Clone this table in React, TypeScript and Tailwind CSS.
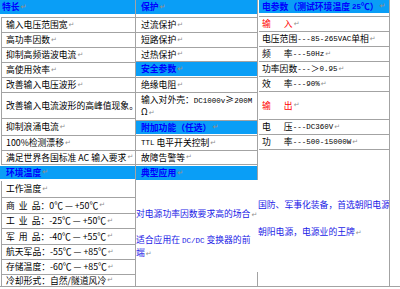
import React from "react";

type C = { className?: string; children?: React.ReactNode };

function P() {
  return (
    <span className="ml-[1px] font-['DejaVu_Sans',sans-serif] text-[7px] leading-none text-[#8f8f8f]">
      ↵
    </span>
  );
}

function M({ children }: C) {
  return <span className="font-['Liberation_Mono',monospace] text-[7.5px]">{children}</span>;
}

function Head({ className = "", children }: C) {
  return (
    <div
      className={
        "flex shrink-0 items-center overflow-hidden whitespace-nowrap bg-[#0a9ef6] font-bold text-[#0000ff] " +
        className
      }
    >
      {children}
    </div>
  );
}

function Cell1({ className = "", children }: C) {
  return (
    <div
      className={
        "ml-px flex shrink-0 items-center overflow-hidden whitespace-nowrap border-l border-[#a3a3a3] pl-[4px] " +
        className
      }
    >
      {children}
    </div>
  );
}

function Cell2({ className = "", children }: C) {
  return (
    <div
      className={
        "flex shrink-0 items-center overflow-hidden whitespace-nowrap border-[#a3a3a3] pl-[5px] " + className
      }
    >
      {children}
    </div>
  );
}

function Cell3({ className = "", children }: C) {
  return (
    <div
      className={
        "ml-px flex shrink-0 items-center overflow-hidden whitespace-nowrap border-[#a3a3a3] pl-[3px] " + className
      }
    >
      {children}
    </div>
  );
}

function Temp({ a, b, c, v }: { a: string; b: string; c: string; v: string }) {
  return (
    <>
      <span>{a}</span>
      <span className="ml-[4px]">{b}</span>
      <span className="ml-[4px]">{c}</span>
      <span>：{v}</span>
      <P />
    </>
  );
}

export default function App() {
  return (
    <div className="h-[289px] w-[400px] overflow-hidden bg-white font-['Noto_Sans_CJK_SC',sans-serif] text-[8.8px] leading-[12px] text-black">
      <div className="flex h-[287px] w-[400px] border-b border-[#a3a3a3]">
        <div className="flex h-full w-[390px] border-r border-[#a3a3a3]">
          {/* Column 1 */}
          <div className="flex w-[135px] shrink-0 flex-col">
            <Head className="h-[14px] pl-[2px]">
              特长
              <P />
            </Head>
            <div className="h-[3px] shrink-0" />
            <Cell1 className="h-[15px] border-t">
              输入电压范围宽
              <P />
            </Cell1>
            <Cell1 className="h-[15px] border-t">
              高功率因数
              <P />
            </Cell1>
            <Cell1 className="h-[15px] border-t">
              抑制高频谐波电流
              <P />
            </Cell1>
            <Cell1 className="h-[15px] border-t">
              高使用效率
              <P />
            </Cell1>
            <Cell1 className="h-[15px] border-t">
              改善输入电压波形
              <P />
            </Cell1>
            <Cell1 className="h-[26px] border-t">
              改善输入电流波形的高峰值现象。
              <P />
            </Cell1>
            <Cell1 className="h-[17px] border-t">
              抑制浪涌电流
              <P />
            </Cell1>
            <Cell1 className="h-[15px] border-t">
              100%检测漂移
              <P />
            </Cell1>
            <Cell1 className="h-[15px] border-t border-b">
              满足世界各国标准 AC 输入要求
              <P />
            </Cell1>
            <div className="h-[1px] shrink-0" />
            <Head className="h-[13px] pl-[6px]">
              环境温度
              <P />
            </Head>
            <div className="h-[2px] shrink-0" />
            <Cell1 className="h-[16px]">
              工作温度
              <P />
            </Cell1>
            <Cell1 className="h-[16px] border-t">
              <Temp a="商" b="业" c="品" v="0℃ — +50℃" />
            </Cell1>
            <Cell1 className="h-[15px] border-t">
              <Temp a="工" b="业" c="品" v="-25℃ — +50℃" />
            </Cell1>
            <Cell1 className="h-[16px] border-t">
              <Temp a="军" b="用" c="品" v="-40℃ — +55℃" />
            </Cell1>
            <Cell1 className="h-[15px] border-t">
              航天军品：-55℃ — +85℃
              <P />
            </Cell1>
            <Cell1 className="h-[15px] border-t">
              存储温度：-60℃ — +85℃
              <P />
            </Cell1>
            <Cell1 className="h-[12px] border-t">
              冷却形式：自然/隧道风冷
              <P />
            </Cell1>
          </div>

          {/* Column 2 */}
          <div className="flex w-[123px] shrink-0 flex-col border-l border-[#a3a3a3]">
            <div className="flex shrink-0 flex-col border-r border-[#a3a3a3]">
              <Head className="h-[14px] pl-[5px]">
                保护
                <P />
              </Head>
              <div className="h-[3px] shrink-0" />
              <Cell2 className="h-[15px] border-t">
                过流保护
                <P />
              </Cell2>
              <Cell2 className="h-[15px] border-t">
                短路保护
                <P />
              </Cell2>
              <Cell2 className="h-[15px] border-t border-b">
                过热保护
                <P />
              </Cell2>
              <Head className="h-[14px] pl-[5px]">
                安全参数
                <P />
              </Head>
              <div className="h-[1px] shrink-0" />
              <Cell2 className="h-[15px] border-t">
                绝缘电阻
                <P />
              </Cell2>
              <div className="flex h-[29px] shrink-0 flex-col overflow-hidden whitespace-nowrap border-t border-b border-[#a3a3a3] pt-[1px] pl-[5px] leading-[12px]">
                <div className="h-[12px]">
                  输入对外壳：<M>DC1000v</M>≥<M>200M</M>
                </div>
                <div className="h-[12px]">
                  Ω<P />
                </div>
              </div>
              <Head className="h-[13px] pl-[5px]">
                附加功能（任选）
                <P />
              </Head>
              <div className="h-[1px] shrink-0" />
              <Cell2 className="h-[15px] border-t">
                <M>TTL</M>&nbsp;电平开关控制
                <P />
              </Cell2>
              <Cell2 className="h-[15px] border-t border-b">
                故障告警等
                <P />
              </Cell2>
              <div className="h-[1px] shrink-0" />
              <Head className="h-[14px] pl-[5px]">
                典型应用
                <P />
              </Head>
            </div>
            <div className="flex flex-1 flex-col whitespace-nowrap text-[#1a1ae6]">
              <div className="mt-[28px]">
                对电源功率因数要求高的场合
                <P />
              </div>
              <div className="mt-[14px]">
                适合应用在 <M>DC/DC</M> 变换器的前
              </div>
              <div>
                端<P />
              </div>
              <div className="flex-1" />
              <div className="flex justify-end">
                <div className="h-[14px] w-px bg-[#a3a3a3]" />
              </div>
            </div>
          </div>

          {/* Column 3 */}
          <div className="flex min-w-0 flex-1 flex-col overflow-hidden">
            <Head className="ml-px h-[13px] pl-[3px]">
              电参数（测试环境温度&nbsp;<M>25</M>℃）
              <P />
            </Head>
            <div className="h-[3px] shrink-0" />
            <Cell3 className="h-[15px] border-t text-[#ff0000]">
              输<span className="ml-[13px]">入</span>
              <P />
            </Cell3>
            <Cell3 className="h-[15px] border-t">
              电压范围<M>---85-265VAC </M>单相
              <P />
            </Cell3>
            <Cell3 className="h-[15px] border-t">
              频<span className="ml-[13px]">率</span>
              <M>---50Hz</M>
              <P />
            </Cell3>
            <Cell3 className="h-[15px] border-t">
              功率因数<M>---</M>＞<M>0.95</M>
              <P />
            </Cell3>
            <Cell3 className="h-[15px] border-t">
              效<span className="ml-[13px]">率</span>
              <M>---90%</M>
              <P />
            </Cell3>
            <Cell3 className="h-[28px] border-t text-[#ff0000]">
              输<span className="ml-[13px]">出</span>
              <P />
            </Cell3>
            <Cell3 className="h-[15px] border-t">
              电<span className="ml-[13px]">压</span>
              <M>---DC360V</M>
              <P />
            </Cell3>
            <Cell3 className="h-[16px] border-t border-b">
              功<span className="ml-[13px]">率</span>
              <M>---500-15000W</M>
              <P />
            </Cell3>
            <div className="whitespace-nowrap text-[#1a1ae6]">
              <div className="mt-[49px]">国防、军事化装备，首选朝阳电源</div>
              <div className="mt-[15px]">
                朝阳电源，电源业的王牌
                <P />
              </div>
            </div>
          </div>
        </div>
      </div>
    </div>
  );
}
